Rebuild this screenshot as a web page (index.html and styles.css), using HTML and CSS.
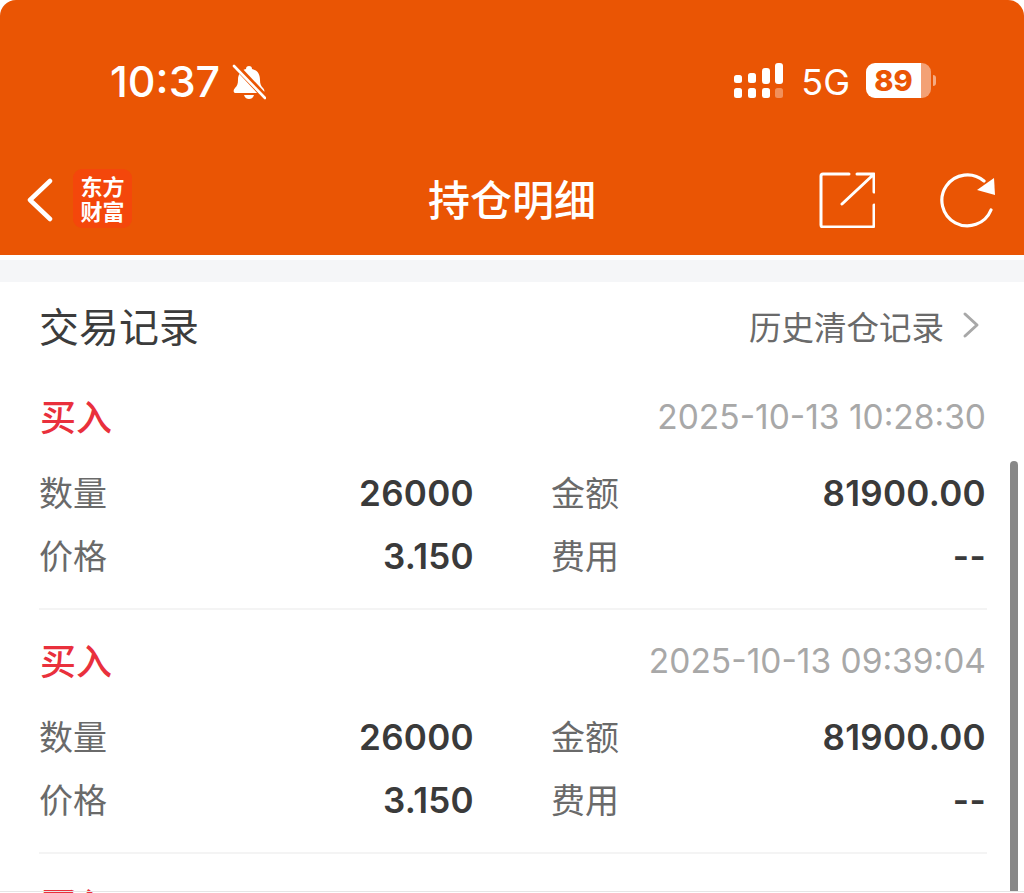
FILE: index.html
```html
<!DOCTYPE html>
<html lang="zh-CN">
<head>
<meta charset="utf-8">
<title>持仓明细</title>
<link rel="stylesheet" href="styles.css">
</head>
<body>
<div class="screen">
  <header class="hero">
    <div class="status">
      <div class="status-left">
        <span class="clock">10:37</span>
        <svg class="bell" viewBox="0 0 34 36" width="34" height="36">
          <path fill="#fff" d="M17 2c-2 0-3 1-3 3-5 1-8 5-8 11 0 4-1 6-3 8-2 2-2 5 1 5h26c3 0 3-3 1-5-2-2-3-4-3-8 0-6-3-10-8-11 0-2-1-3-3-3z"/>
          <path fill="#fff" d="M12 31h10c-1 3-3 4-5 4s-4-1-5-4z"/>
          <path stroke="#ea5504" stroke-width="6" d="M2 0l32 34"/>
          <path stroke="#fff" stroke-width="2.6" stroke-linecap="round" d="M2 2l31 32"/>
        </svg>
      </div>
      <div class="status-right">
        <svg class="signal" viewBox="0 0 50 36" width="50" height="36">
          <g fill="#fff">
            <rect x="0" y="12" width="8" height="8" rx="2.5"/>
            <rect x="14" y="10" width="8" height="10" rx="2.5"/>
            <rect x="28" y="5" width="8" height="16" rx="3"/>
            <rect x="41" y="0" width="8" height="21" rx="3"/>
            <rect x="0" y="25" width="8" height="10" rx="2.5"/>
            <rect x="14" y="25" width="8" height="10" rx="2.5"/>
            <rect x="28" y="25" width="8" height="10" rx="2.5"/>
            <rect x="41" y="25" width="8" height="10" rx="2.5" opacity=".35"/>
          </g>
        </svg>
        <span class="net">5G</span>
        <div class="battery">
          <span class="battery-fill">89</span>
          <span class="battery-rest"></span>
        </div>
        <span class="battery-nub"></span>
      </div>
    </div>
    <nav class="nav">
      <div class="nav-left">
        <svg class="back" viewBox="0 0 26 44" width="26" height="44">
          <path fill="none" stroke="#fff" stroke-width="4.500" stroke-linecap="round" stroke-linejoin="round" d="M23 3L3 22l20 19"/>
        </svg>
        <div class="logo">东方<br>财富</div>
      </div>
      <h1 class="title">持仓明细</h1>
      <div class="nav-right">
        <svg class="action" viewBox="0 0 56 56" width="56" height="56">
          <path fill="none" stroke="#fff" stroke-width="3" stroke-linecap="round" stroke-linejoin="round" d="M30 2H4a2 2 0 0 0-2 2v49a2 2 0 0 0 2 2h49a2 2 0 0 0 2-2V33M23 32L54 3M38 2h17v18"/>
        </svg>
        <svg class="action" viewBox="0 0 56 56" width="56" height="56">
          <path fill="none" stroke="#fff" stroke-width="3.200" stroke-linecap="round" d="M52 38A25.500 25.500 0 1 1 45 9"/>
          <path fill="#fff" d="M55 6l1 17-18-5z"/>
        </svg>
      </div>
    </nav>
  </header>
  <div class="strip"></div>

  <main class="content">
    <div class="section-head">
      <h2 class="section-title">交易记录</h2>
      <div class="history">
        <span>历史清仓记录</span>
        <svg viewBox="0 0 18 28" width="18" height="28">
          <path fill="none" stroke="#a8a8a8" stroke-width="3" stroke-linecap="round" stroke-linejoin="round" d="M3 3l12 11L3 25"/>
        </svg>
      </div>
    </div>

    <section class="record">
      <div class="record-head"><span class="side">买入</span><span class="time">2025-10-13 10:28:30</span></div>
      <div class="grid">
        <div class="cell"><span class="label">数量</span><span class="value">26000</span></div>
        <div class="cell"><span class="label">金额</span><span class="value">81900.00</span></div>
        <div class="cell"><span class="label">价格</span><span class="value">3.150</span></div>
        <div class="cell"><span class="label">费用</span><span class="value">--</span></div>
      </div>
    </section>

    <section class="record">
      <div class="record-head"><span class="side">买入</span><span class="time">2025-10-13 09:39:04</span></div>
      <div class="grid">
        <div class="cell"><span class="label">数量</span><span class="value">26000</span></div>
        <div class="cell"><span class="label">金额</span><span class="value">81900.00</span></div>
        <div class="cell"><span class="label">价格</span><span class="value">3.150</span></div>
        <div class="cell"><span class="label">费用</span><span class="value">--</span></div>
      </div>
    </section>

    <section class="record">
      <div class="record-head"><span class="side">买入</span></div>
    </section>
  </main>
  <div class="scrollbar"></div>
  <div class="bottom-line"></div>
</div>
</body>
</html>
```
FILE: styles.css
```css
* { box-sizing: border-box; }
html, body { margin: 0; padding: 0; background: #fff; }
body { font-family: Inter, "Noto Sans CJK SC", sans-serif; }
.screen { position: relative; width: 1024px; height: 893px; overflow: hidden; background: #fff; }

.hero { height: 255px; background: #ea5504; border-radius: 16px 16px 0 0; color: #fff; }
.status { height: 163px; display: flex; justify-content: space-between; padding: 58px 88px 0 110px; }
.status-left { display: flex; align-items: flex-start; gap: 12px; }
.clock { font-size: 43px; line-height: 46px; font-weight: 500; }
.bell { margin-top: 6px; }
.status-right { display: flex; align-items: flex-start; }
.signal { margin-top: 5px; }
.net { margin-left: 17px; font-size: 36px; line-height: 48px; font-weight: 400; }
.battery { margin: 5px 0 0 16px; width: 65px; height: 35px; display: flex; border-radius: 9px; overflow: hidden; }
.battery-fill { width: 55px; background: #fff; color: #ea5504; font-size: 29px; line-height: 35px; font-weight: 800; text-align: center; }
.battery-rest { flex: 1; background: rgba(255,255,255,.45); }
.battery-nub { width: 3px; height: 11px; margin: 17px 0 0 2px; background: rgba(255,255,255,.5); border-radius: 0 3px 3px 0; }

.nav { position: relative; height: 92px; display: flex; justify-content: space-between; padding: 0 29px 0 27px; }
.nav-left { display: flex; align-items: flex-start; }
.back { margin-top: 15px; }
.logo { width: 59px; height: 59px; margin: 6px 0 0 20px; background: #f4470b; border-radius: 9px; text-align: center; padding-top: 4px; font-family: "Noto Sans CJK SC", sans-serif; font-size: 22px; line-height: 25px; font-weight: 700; }
.title { position: absolute; left: 0; right: 0; top: 9px; margin: 0; text-align: center; font-family: "Noto Sans CJK SC", sans-serif; font-size: 42px; line-height: 52px; font-weight: 500; }
.nav-right { display: flex; align-items: flex-start; gap: 64px; padding-top: 9px; }

.strip { height: 27px; background: #f5f6f8; border-top: 5px solid #fff; }

.content { padding: 0 37px 0 39px; font-family: "Noto Sans CJK SC", sans-serif; }
.section-head { height: 94px; padding-bottom: 8px; display: flex; justify-content: space-between; align-items: center; }
.section-title { margin: 0; font-size: 40px; line-height: 50px; font-weight: 400; color: #3c3c3c; }
.history { display: flex; align-items: center; gap: 18px; margin-right: 7px; font-size: 32.500px; color: #6a6a6a; }

.record { height: 234px; margin-bottom: 10px; padding-top: 17px; border-bottom: 2px solid #f4f4f4; }
.record-head { height: 44px; padding-right: 1px; display: flex; justify-content: space-between; align-items: center; }
.side { font-size: 36px; line-height: 44px; color: #e9303c; font-weight: 500; margin-left: 1px; }
.time { font-family: Inter, sans-serif; font-size: 33.500px; margin-top: 4px; color: #a8a8a8; }
.grid { display: grid; grid-template-columns: 435px 435px; column-gap: 77px; grid-auto-rows: 63px; margin-top: 23px; }
.cell { display: flex; justify-content: space-between; align-items: center; }
.label { font-size: 34px; line-height: 44px; color: #6a6a6a; }
.value { font-family: Inter, sans-serif; font-size: 35px; font-weight: 600; letter-spacing: .3px; margin-top: 2px; color: #3a3a3a; }

.scrollbar { position: absolute; left: 1010px; top: 461px; bottom: 2px; width: 8px; background: #888; border-radius: 4px 4px 0 0; }
.bottom-line { position: absolute; left: 0; right: 0; bottom: 1px; height: 1px; background: #e6e6e6; }
```
